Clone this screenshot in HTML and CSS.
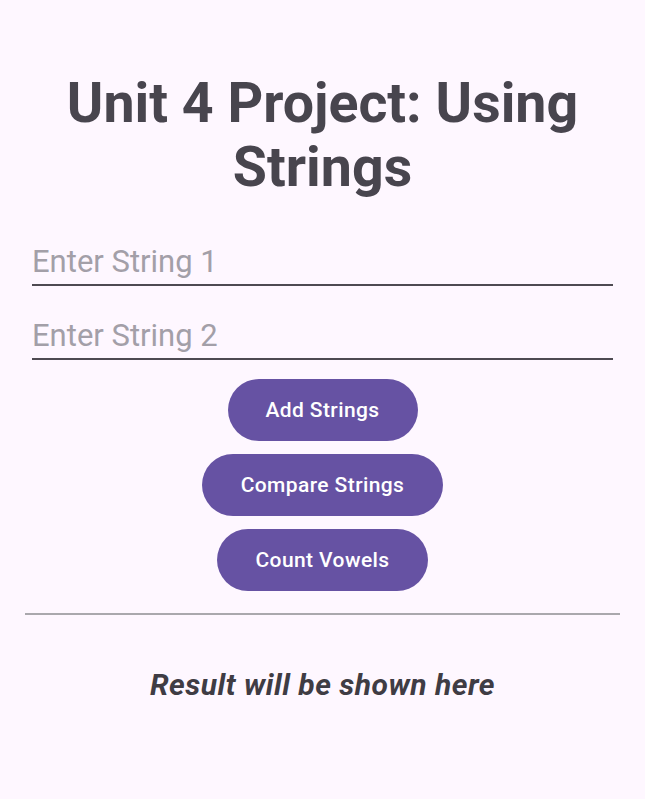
FILE: index.html
```html
<!DOCTYPE html>
<html>
<head>
<meta charset="utf-8">
<link rel="stylesheet" href="styles.css">
</head>
<body>
<main class="screen">
  <h1 class="title">Unit 4 Project: Using Strings</h1>
  <div class="fields">
    <input class="field" type="text" placeholder="Enter String 1">
    <input class="field" type="text" placeholder="Enter String 2">
  </div>
  <div class="actions">
    <button class="btn btn-add">Add Strings</button>
    <button class="btn btn-compare">Compare Strings</button>
    <button class="btn btn-count">Count Vowels</button>
  </div>
  <hr class="divider">
  <p class="result">Result will be shown here</p>
</main>
</body>
</html>
```
FILE: styles.css
```css
html, body {
  margin: 0;
  padding: 0;
  background: #fef7ff;
}
.screen {
  width: 645px;
  height: 799px;
  box-sizing: border-box;
  padding-top: 72px;
  font-family: Roboto, "Noto Sans", sans-serif;
  display: flex;
  flex-direction: column;
  align-items: center;
}
.title {
  margin: 0;
  width: 560px;
  text-align: center;
  font-size: 55.5px;
  font-weight: 700;
  line-height: 64px;
  color: #48454e;
}
.fields {
  align-self: stretch;
  display: flex;
  flex-direction: column;
  gap: 16px;
  padding: 28px 32px 0;
}
.field {
  display: block;
  box-sizing: border-box;
  width: 100%;
  height: 58px;
  border: none;
  border-bottom: 2px solid #4e4a52;
  background: transparent;
  font-family: Roboto, sans-serif;
  font-size: 31px;
  color: #1d1b20;
  padding: 10px 0 0 0;
  outline: none;
}
.field::placeholder {
  color: #a39fa8;
}
.actions {
  display: flex;
  flex-direction: column;
  align-items: center;
  gap: 13px;
  margin-top: 19px;
}
.btn {
  height: 62px;
  border: none;
  border-radius: 31px;
  background: #6652a3;
  color: #ffffff;
  font-family: Roboto, sans-serif;
  font-size: 21px;
  font-weight: 500;
  letter-spacing: 0.4px;
  padding: 0;
}
.btn-add { width: 190px; }
.btn-compare { width: 241px; }
.btn-count { width: 211px; }
.divider {
  align-self: stretch;
  margin: 22px 25px 0;
  border: none;
  border-top: 2px solid #aaa8ad;
  height: 0;
}
.result {
  margin: 52px 0 0;
  font-size: 30px;
  font-weight: 700;
  font-style: italic;
  letter-spacing: 0.5px;
  color: #3f3c44;
}
```
